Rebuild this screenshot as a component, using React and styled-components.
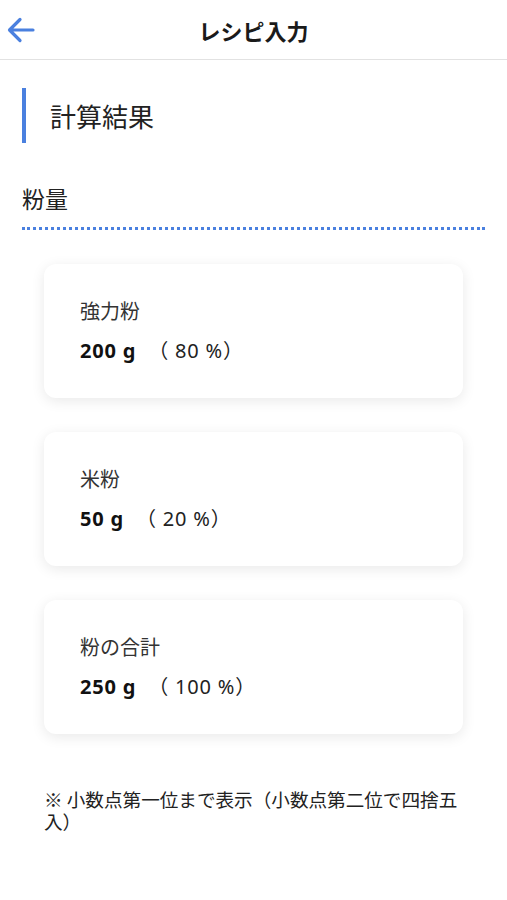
import styled, { createGlobalStyle } from "styled-components";

const GlobalStyle = createGlobalStyle`
  body {
    margin: 0;
    background: #ffffff;
    font-family: "Noto Sans CJK JP", "Noto Sans", sans-serif;
    color: #222;
  }
`;

const flours = [
  { name: "強力粉", grams: 200, percent: 80 },
  { name: "米粉", grams: 50, percent: 20 },
  { name: "粉の合計", grams: 250, percent: 100 },
];

export default function App() {
  return (
    <>
      <GlobalStyle />
      <Page>
        <Header>
          <BackButton aria-label="back">
            <svg width="30" height="28" viewBox="0 0 30 28" fill="none">
              <path
                d="M27 14H4M14 3.5L3.5 14L14 24.5"
                stroke="#4a80df"
                strokeWidth="3.2"
                strokeLinecap="round"
                strokeLinejoin="round"
              />
            </svg>
          </BackButton>
          <Title>レシピ入力</Title>
        </Header>

        <Content>
          <SectionTitle>計算結果</SectionTitle>
          <SubTitle>粉量</SubTitle>

          <CardList>
            {flours.map((f) => (
              <Card key={f.name}>
                <Label>{f.name}</Label>
                <Value>
                  <strong>{f.grams} g</strong>
                  <Percent>（ {f.percent} %）</Percent>
                </Value>
              </Card>
            ))}
          </CardList>

          <Note>※ 小数点第一位まで表示（小数点第二位で四捨五入）</Note>
        </Content>
      </Page>
    </>
  );
}

const Page = styled.div`
  width: 507px;
  min-height: 900px;
  background: #fff;
`;

const Header = styled.header`
  position: relative;
  height: 59px;
  display: flex;
  align-items: center;
  justify-content: center;
  border-bottom: 1px solid #e2e2e2;
`;

const BackButton = styled.button`
  position: absolute;
  left: 6px;
  top: 16px;
  background: none;
  border: none;
  padding: 0;
  display: flex;
`;

const Title = styled.h1`
  margin: 0;
  font-size: 22px;
  font-weight: 700;
  color: #1a1a1a;
`;

const Content = styled.main`
  padding: 28px 22px 0;
`;

const SectionTitle = styled.h2`
  margin: 0;
  height: 55px;
  display: flex;
  align-items: center;
  border-left: 4px solid #4a80df;
  padding-left: 24px;
  font-size: 26px;
  font-weight: 400;
  color: #222;
`;

const SubTitle = styled.h3`
  margin: 40px 0 0;
  padding-bottom: 14px;
  font-size: 23px;
  font-weight: 400;
  line-height: 30px;
  color: #222;
  border-bottom: 3px dotted #4a80df;
`;

const CardList = styled.div`
  display: flex;
  flex-direction: column;
  gap: 34px;
  padding: 34px 22px 0;
`;

const Card = styled.div`
  height: 134px;
  box-sizing: border-box;
  padding: 34px 36px 0;
  background: #fff;
  border-radius: 12px;
  box-shadow: 0 3px 14px rgba(0, 0, 0, 0.09);
`;

const Label = styled.div`
  font-size: 20px;
  line-height: 26px;
  color: #333;
`;

const Value = styled.div`
  margin-top: 14px;
  font-family: "Noto Sans", "Noto Sans CJK JP", sans-serif;
  font-size: 20px;
  line-height: 26px;
  letter-spacing: 0.8px;
  color: #111;

  strong {
    font-weight: 700;
  }
`;

const Percent = styled.span`
  margin-left: 12px;
  color: #222;
`;

const Note = styled.p`
  margin: 54px 22px 0;
  font-size: 18.6px;
  line-height: 22px;
  color: #222;
`;
